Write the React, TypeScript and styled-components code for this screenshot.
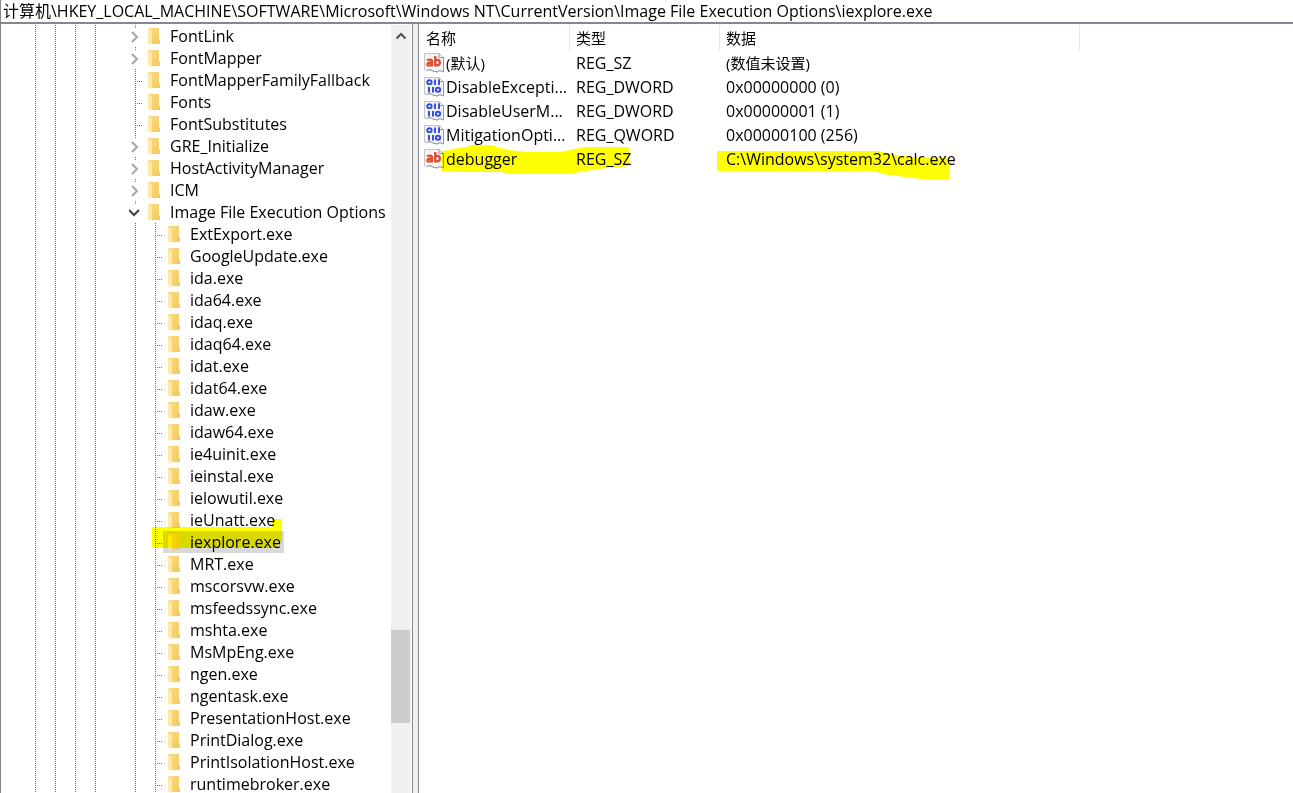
import React from "react";
import styled, { createGlobalStyle, css } from "styled-components";

const Global = createGlobalStyle`
  * { box-sizing: border-box; }
  body { margin: 0; background: #fff; }
  body, input, button, table {
    font-family: "Open Sans", "Noto Sans CJK SC", sans-serif;
    font-size: 16px;
    color: #000;
  }
`;

const Window = styled.div`
  display: flex;
  flex-direction: column;
  height: 100vh;
  overflow: hidden;
  border-left: 1px solid #828790;
`;

const AddressBar = styled.input`
  flex: none;
  height: 24px;
  width: 100%;
  padding: 0 2px 2px;
  border: 0;
  border-bottom: 2px solid #828790;
  border-radius: 0;
  outline: 0;
  background: #fff;
`;

const Panes = styled.div`
  display: flex;
  flex: 1;
  min-height: 0;
`;

const TreePane = styled.nav`
  display: flex;
  flex: none;
  width: 412px;
  padding: 1px 1px 0 0;
  border-right: 1px solid #828790;
  overflow: hidden;
`;

const Splitter = styled.div`
  flex: none;
  width: 6px;
  background: #f0f0f0;
  border-right: 1px solid #828790;
`;

const Tree = styled.ul`
  flex: 1;
  margin: 0;
  padding: 0 0 0 25px;
  list-style: none;
`;

const TreeRow = styled.li`
  display: flex;
  height: 22px;
  position: relative;
`;

const dotsDown = "repeating-linear-gradient(180deg, #707070 0 1px, transparent 1px 2px)";
const dotsAcross = "repeating-linear-gradient(90deg, #707070 0 1px, transparent 1px 2px)";

const Guide = styled.span<{ $line?: boolean }>`
  flex: none;
  width: 20px;
  ${(p) => p.$line && css`background: ${dotsDown} 9px 0 / 1px 100% no-repeat;`}
`;

const Branch = styled.span`
  flex: none;
  width: 17px;
  background: ${dotsDown} 9px 0 / 1px 100% no-repeat, ${dotsAcross} 9px 12px / 8px 1px no-repeat;
`;

const Expander = styled.button`
  flex: none;
  width: 17px;
  padding: 0 0 0 3px;
  border: 0;
  background: ${dotsDown} 9px 0 / 1px 3px no-repeat;
  line-height: 0;
  text-align: left;
`;

const KeyLabel = styled.button<{ $selected?: boolean }>`
  display: flex;
  align-items: center;
  gap: 10px;
  height: 22px;
  padding: 0 3px 0 5px;
  border: 0;
  background: ${(p) => (p.$selected ? "#d9d9d9" : "transparent")};
  line-height: 20px;
  white-space: nowrap;
`;

const Marker = styled.svg`
  position: absolute;
  pointer-events: none;
  mix-blend-mode: multiply;
  fill: #ffff00;
`;

const TreeMarker = styled(Marker)`
  left: 126px;
  top: -12px;
`;

const ScrollBar = styled.div`
  display: flex;
  flex-direction: column;
  flex: none;
  width: 20px;
  background: #f0f0f0;
`;

const ScrollButton = styled.button`
  flex: none;
  height: 22px;
  padding: 0;
  border: 0;
  background: transparent;
  line-height: 0;
`;

const ScrollGap = styled.div<{ $size: number }>`
  flex: ${(p) => p.$size};
`;

const ScrollThumb = styled.div`
  flex: 93;
  width: 19px;
  background: #cdcdcd;
`;

const ListPane = styled.main`
  flex: 1;
  min-width: 0;
  padding: 1px 0 0 1px;
`;

const Values = styled.table`
  width: 100%;
  table-layout: fixed;
  border-collapse: separate;
  border-spacing: 0;
`;

const Column = styled.col<{ $width?: number }>`
  ${(p) => p.$width && css`width: ${p.$width}px;`}
`;

const HeadCell = styled.th`
  height: 26px;
  padding: 0 6px;
  border-right: 1px solid #e5e5e5;
  font-size: 15px;
  font-weight: 400;
  line-height: 26px;
  text-align: left;
  &:last-child { border-right: 0; }
`;

const Cell = styled.td`
  position: relative;
  height: 24px;
  padding: 0 0 0 6px;
  line-height: 24px;
  white-space: nowrap;
  &:lang(zh) { font-size: 15px; }
`;

const ValueName = styled.span`
  display: flex;
  align-items: center;
  gap: 2px;
  margin-left: -2px;
`;

const NameMarker = styled(Marker)`
  left: 22px;
  top: -2px;
`;

const DataMarker = styled(Marker)`
  left: -3px;
  top: 3px;
`;

const Folder = () => (
  <svg width="12" height="18" viewBox="0 0 12 18" aria-hidden="true">
    <defs>
      <linearGradient id="back" x1="0" x2="1" y1="0" y2="1">
        <stop offset="0" stopColor="#f8dc86" />
        <stop offset="1" stopColor="#f2c95e" />
      </linearGradient>
    </defs>
    <path d="M0 1H11V12L12 13V17H3L0 14Z" fill="url(#back)" />
    <path d="M0 1L4 4V16L3 18L0 16Z" fill="#ffe9a6" />
  </svg>
);

const Chevron = ({ open }: { open?: boolean }) => (
  <svg width="14" height="17" viewBox="0 0 14 17" fill="none" aria-hidden="true">
    {open ? (
      <path d="M0 6L5 11L10 6" stroke="#404040" strokeWidth="2" />
    ) : (
      <path d="M3 4L8 9L3 14" stroke="#a6a6a6" strokeWidth="2" />
    )}
  </svg>
);

const ValueIcon = ({ text }: { text?: boolean }) => (
  <svg width="20" height="20" viewBox="0 0 20 20" aria-hidden="true">
    <path
      d="M.5 .5H15L19.500 4.500V19L16 17.500L13 19L9 18L6 16.500L3 17.500L.5 17Z"
      fill="#f3f3f5"
      stroke="#c4c4c8"
    />
    <path d="M15 .5V4.500H19.500V19L16 17.500L13 19L9 18L6 16.500L3 17.500" fill="none" stroke="#97979c" />
    {text ? (
      <g fill="none" stroke="#dc4f2e" strokeWidth="2.300">
        <path d="M3 7.300C4.500 6.300 8 6 8 8.500V13.500M8 9.500C5 9.500 3.300 10 3.300 11.300C3.300 13.200 7 12.800 8 11" />
        <path d="M11.200 3V13.500M11.200 9C11.500 6 15.800 6 15.800 9.500C15.800 13 11.500 13.300 11.200 10.500" />
      </g>
    ) : (
      <g fill="none" stroke="#3450dc" strokeWidth="2">
        <ellipse cx="5.500" cy="5.200" rx="2.200" ry="2" />
        <path d="M11 2.500V8M15 2.500V8M5 10V15.500M9 10V15.500" />
        <ellipse cx="14" cy="12.800" rx="2.200" ry="2" />
      </g>
    )}
  </svg>
);

type Key = { name: string; kind?: "closed" | "open"; child?: boolean };

const keys: Key[] = [
  { name: "FontLink", kind: "closed" },
  { name: "FontMapper", kind: "closed" },
  { name: "FontMapperFamilyFallback" },
  { name: "Fonts" },
  { name: "FontSubstitutes" },
  { name: "GRE_Initialize", kind: "closed" },
  { name: "HostActivityManager", kind: "closed" },
  { name: "ICM", kind: "closed" },
  { name: "Image File Execution Options", kind: "open" },
  ...[
    "ExtExport.exe", "GoogleUpdate.exe", "ida.exe", "ida64.exe", "idaq.exe", "idaq64.exe",
    "idat.exe", "idat64.exe", "idaw.exe", "idaw64.exe", "ie4uinit.exe", "ieinstal.exe",
    "ielowutil.exe", "ieUnatt.exe", "iexplore.exe", "MRT.exe", "mscorsvw.exe",
    "msfeedssync.exe", "mshta.exe", "MsMpEng.exe", "ngen.exe", "ngentask.exe",
    "PresentationHost.exe", "PrintDialog.exe", "PrintIsolationHost.exe", "runtimebroker.exe",
  ].map((name) => ({ name, child: true })),
];

const values = [
  { name: "(默认)", type: "REG_SZ", data: "(数值未设置)", text: true, lang: "zh" },
  { name: "DisableExcepti...", type: "REG_DWORD", data: "0x00000000 (0)" },
  { name: "DisableUserM...", type: "REG_DWORD", data: "0x00000001 (1)" },
  { name: "MitigationOpti...", type: "REG_QWORD", data: "0x00000100 (256)" },
  { name: "debugger", type: "REG_SZ", data: "C:\\Windows\\system32\\calc.exe", text: true, marked: true },
];

const KeyRow = ({ name, kind, child }: Key) => {
  const selected = name === "iexplore.exe";
  return (
    <TreeRow>
      <Guide $line /><Guide $line /><Guide $line /><Guide $line /><Guide />
      {child && <Guide $line />}
      {kind ? (
        <Expander aria-label={`Toggle ${name}`} aria-expanded={kind === "open"}>
          <Chevron open={kind === "open"} />
        </Expander>
      ) : (
        <Branch />
      )}
      <KeyLabel $selected={selected}>
        <Folder />
        {name}
      </KeyLabel>
      {selected && (
        <TreeMarker width="130" height="30" aria-hidden="true">
          <path d="M0 8H120V0H130V23H125V29H0Z" />
        </TreeMarker>
      )}
    </TreeRow>
  );
};

export default function App() {
  return (
    <>
      <Global />
      <Window>
        <AddressBar
          aria-label="Address"
          defaultValue={"计算机\\HKEY_LOCAL_MACHINE\\SOFTWARE\\Microsoft\\Windows NT\\CurrentVersion\\Image File Execution Options\\iexplore.exe"}
        />
        <Panes>
          <TreePane>
            <Tree>
              {keys.map((k) => <KeyRow key={k.name} {...k} />)}
            </Tree>
            <ScrollBar>
              <ScrollButton aria-label="Scroll up">
                <svg width="12" height="8" viewBox="0 0 12 8" fill="none" aria-hidden="true">
                  <path d="M1.500 6.500L6 2L10.500 6.500" stroke="#505050" strokeWidth="2" />
                </svg>
              </ScrollButton>
              <ScrollGap $size={583} />
              <ScrollThumb />
              <ScrollGap $size={70} />
            </ScrollBar>
          </TreePane>
          <Splitter />
          <ListPane>
            <Values>
              <colgroup>
                <Column $width={150} /><Column $width={150} /><Column $width={360} /><Column />
              </colgroup>
              <thead>
                <tr>
                  <HeadCell>名称</HeadCell>
                  <HeadCell>类型</HeadCell>
                  <HeadCell>数据</HeadCell>
                  <HeadCell aria-hidden="true" />
                </tr>
              </thead>
              <tbody>
                {values.map((v) => (
                  <tr key={v.name}>
                    <Cell lang={v.lang}>
                      <ValueName><ValueIcon text={v.text} />{v.name}</ValueName>
                      {v.marked && (
                        <NameMarker width="188" height="30" aria-hidden="true">
                          <path d="M0 6L8 5L15 3L24 2L30 0H50L58 3L68 5L84 7H118L132 4L146 2H187V21L165 23L151 25L138 27L126 29H66L60 27H22L0 26Z" />
                        </NameMarker>
                      )}
                    </Cell>
                    <Cell>{v.type}</Cell>
                    <Cell lang={v.lang}>
                      {v.data}
                      {v.marked && (
                        <DataMarker width="233" height="30" aria-hidden="true">
                          <path d="M0 1H162L172 4L185 6L205 8H232V30L204 29L188 27L171 25L160 22L131 21H0Z" />
                        </DataMarker>
                      )}
                    </Cell>
                  </tr>
                ))}
              </tbody>
            </Values>
          </ListPane>
        </Panes>
      </Window>
    </>
  );
}
